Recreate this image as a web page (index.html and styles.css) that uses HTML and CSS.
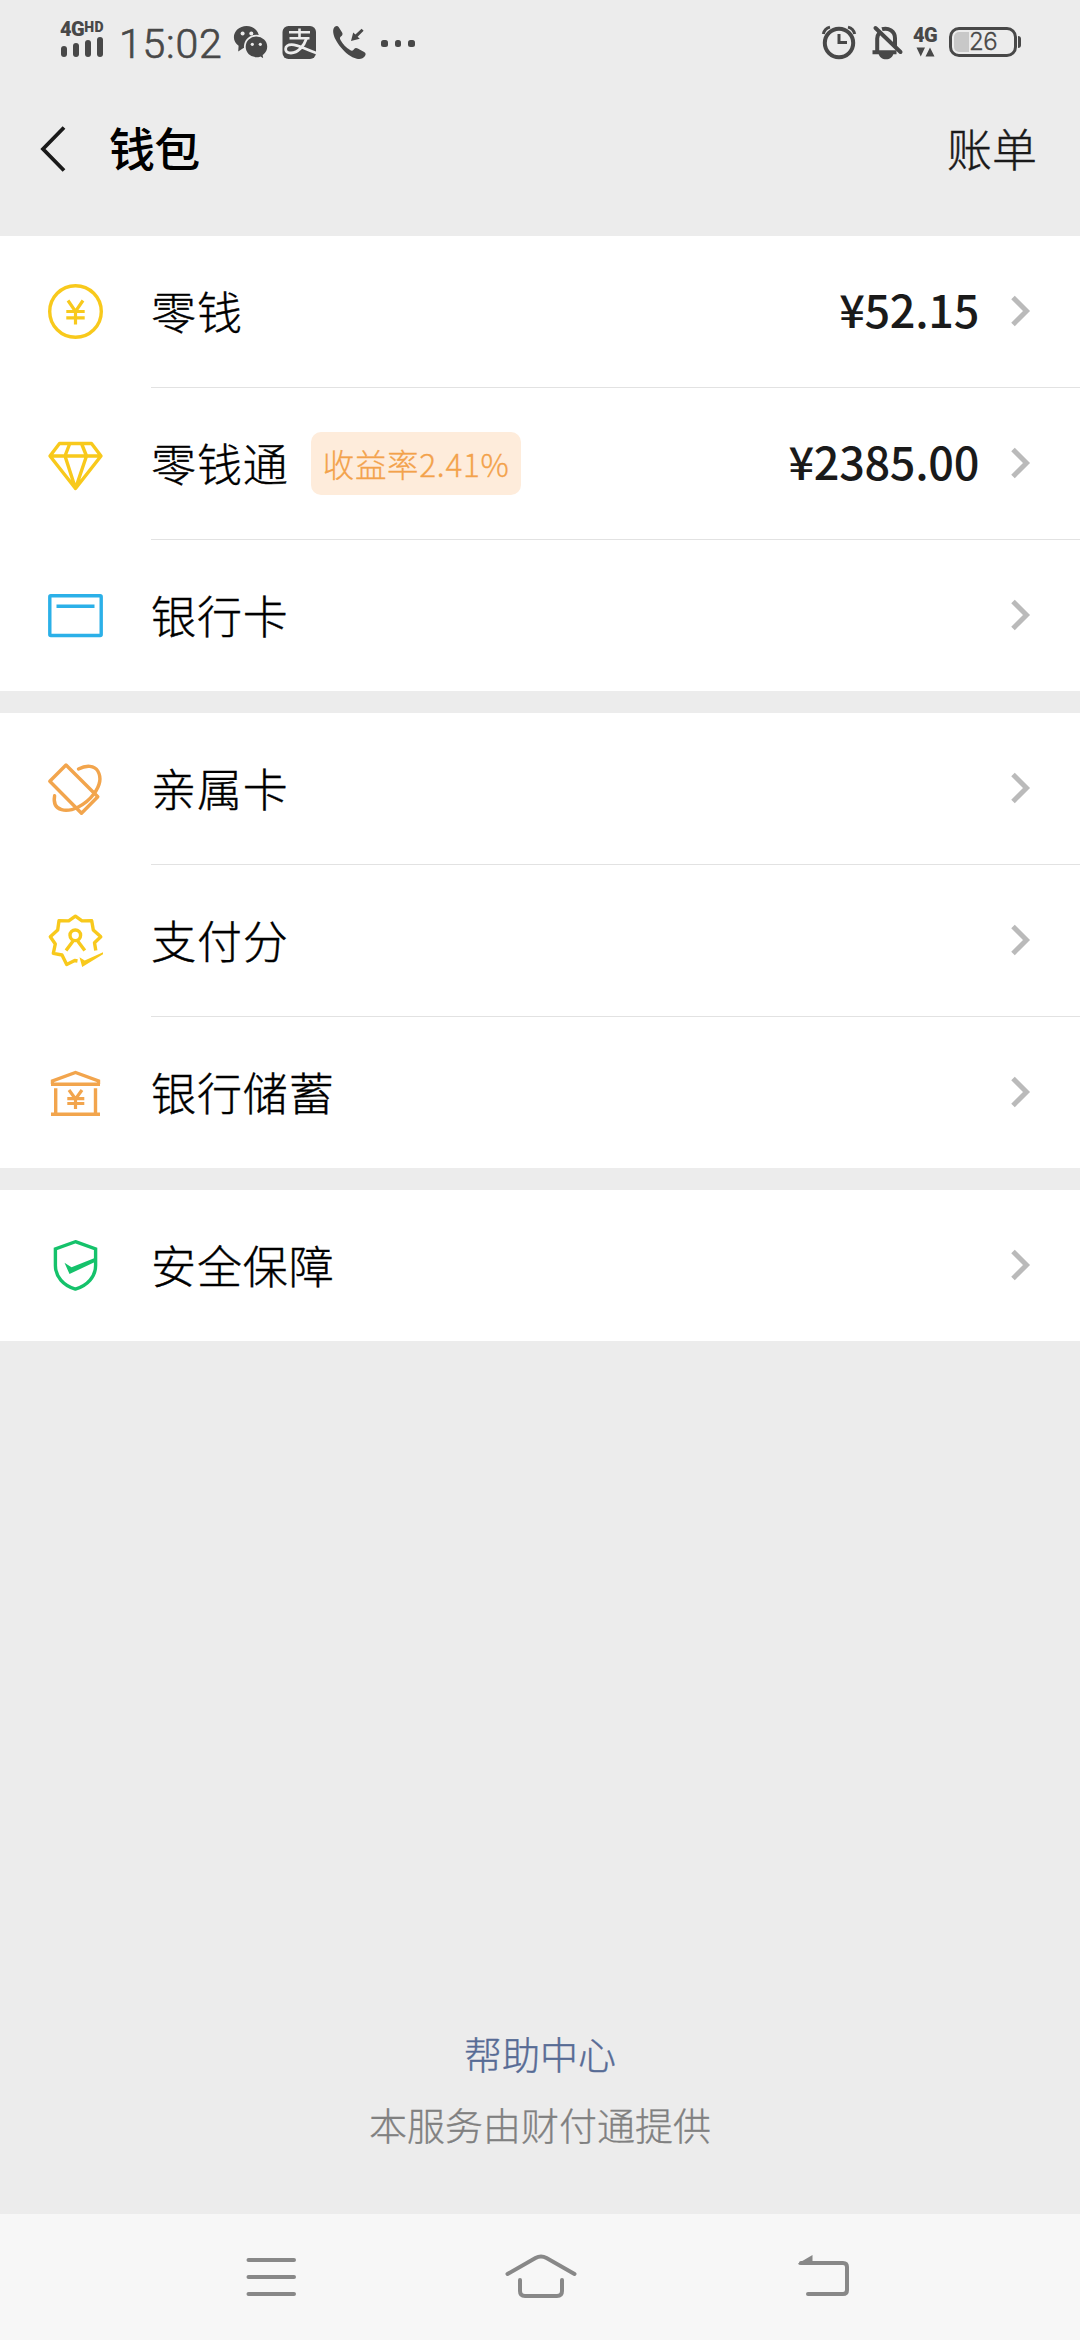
FILE: index.html
```html
<!DOCTYPE html>
<html lang="zh-CN">
<head>
<meta charset="utf-8">
<title>钱包</title>
<link rel="stylesheet" href="styles.css">
</head>
<body>
<div class="screen">
  <header class="status">
    <div class="signal">
      <div class="net"><span class="net-g">4G</span><span class="net-hd">HD</span></div>
      <div class="bars"><i class="bar b1"></i><i class="bar b2"></i><i class="bar b3"></i><i class="bar b4"></i></div>
    </div>
    <div class="time">15:02</div>
    <svg class="st-wechat" width="36" height="36" viewBox="232 25 36 36">
      <path fill="#484848" d="M246.500 26c-7 0-12.600 5-12.600 11.300 0 3.600 1.800 6.500 4.700 8.500l-.4 5.800 5.300-3.600c1 .3 2 .4 3 .4 7 0 12.600-5 12.600-11.100S253.500 26 246.500 26z"/>
      <path fill="#484848" stroke="#ececec" stroke-width="1.800" d="M256.400 35.600c-6.500 0-11.600 4.900-11.600 11.200s5.100 11.300 11.600 11.300c1.500 0 2.800-.2 4-.6l4 2.600-.8-4.600c2.700-2 4.500-5.100 4.500-8.700 0-6.300-5.200-11.200-11.700-11.200z"/>
      <g fill="#ececec"><circle cx="242.600" cy="33.500" r="2"/><circle cx="251.300" cy="33.500" r="2"/><circle cx="252.300" cy="44.300" r="1.600"/><circle cx="260.300" cy="44.300" r="1.600"/></g>
    </svg>
    <svg class="st-alipay" width="36" height="36" viewBox="281 25 36 36">
      <rect x="282.500" y="26" width="33.500" height="33" rx="6" fill="#484848"/>
      <g fill="none" stroke="#ececec"><path stroke-width="2.600" d="M289 32.300h21M289.500 38.300h20M299.500 28.500v9.500"/><path stroke-width="2.800" d="M306.500 38.500c-2.500 7.500-8.500 14.500-15.500 14.500-3.600 0-5.400-1.800-5.400-4 0-2.600 2.400-4.300 6-4.300 7 0 13 4.500 24.600 8.300"/></g>
    </svg>
    <svg class="st-call" width="36" height="36" viewBox="331 25 36 36">
      <path fill="#484848" d="M334.800 26.800c1.600-1.200 3-1 4 .4l3.300 5.400c.8 1.500.5 2.700-.9 3.700-1.500 1.100-1.500 2.200-.7 3.600 2.400 4.300 5.500 7.600 9.600 10.200 1.500.9 2.600.8 3.700-.6 1.200-1.500 2.400-1.800 4-.9l6.300 3.500c1.700 1 2 2.300.9 4-1.900 2.700-4.700 3.500-8.200 2.700-5.900-1.300-11.100-5.500-15.800-11.200-4-5-7.400-10.400-7.800-15.300-.2-2.400.3-4.300 1.600-5.500z"/>
      <path fill="#484848" d="M351 41l2.200-8.600 2.200 2.100 6.200-5.800 2 2-6 6.100 2.200 2z"/>
    </svg>
    <div class="dots"><i class="dot"></i><i class="dot"></i><i class="dot"></i></div>
    <svg class="st-alarm" width="36" height="36" viewBox="820 25 36 36">
      <g fill="none" stroke="#484848"><circle cx="838" cy="43" r="14.200" stroke-width="4"/><path stroke-width="3" d="M838 34v8.500h8"/><path stroke-width="3" d="M822.300 34c.8-3.700 3-6 6.700-6.900M853.700 34c-.8-3.700-3-6-6.700-6.900"/></g>
    </svg>
    <svg class="st-bell" width="34" height="36" viewBox="870 25 34 36">
      <g fill="none" stroke="#484848" stroke-width="4"><path d="M871.500 52.300h24M876.200 51v-12.500c0-2.200.8-4 2-5.500M881 29.200c6.600-2 13 2.300 13 9v8.500"/><path d="M874.500 28l25 24" stroke-linecap="round"/></g>
      <path fill="#484848" d="M877.500 53.500h15c-.8 3.700-3.800 5.800-7.500 5.800s-6.700-2.100-7.500-5.800z"/>
    </svg>
    <div class="data"><span class="data-g">4G</span>
      <svg class="data-arrows" width="19" height="10" viewBox="0 0 19 10"><path fill="#484848" d="M.5.500h8.500l-4.250 9zM9.500 9.500h9l-4.500-9z"/></svg>
    </div>
    <div class="battery"><i class="charge"></i><span class="percent">26</span></div>
    <i class="nub"></i>
  </header>

  <nav class="titlebar">
    <svg class="back" width="30" height="50" viewBox="38 124 30 50"><path fill="none" stroke="#1a1a1a" stroke-width="3.800" d="M64 127.500L43 149l21 21.500"/></svg>
    <h1 class="title">钱包</h1>
    <span class="bill">账单</span>
  </nav>

  <main class="content">
    <section class="group">
      <div class="row">
        <svg class="icon yellow" viewBox="0 0 61 61"><circle cx="30.500" cy="30.500" r="25.800"/><path class="yuan" d="M23 19.500l7.500 11 7.500-11M30.500 30v13.500M21.300 30.500h18.400M21.300 36.800h18.400"/></svg>
        <div class="cell"><span class="label">零钱</span><span class="amount">¥52.15</span><svg class="chev" viewBox="0 0 20 32"><path d="M2 2.500L15.500 16 2 29.500"/></svg></div>
      </div>
      <div class="row">
        <svg class="icon yellow" viewBox="0 0 61 61"><path stroke-linejoin="round" d="M14.500 10.500h32l9.500 12.500-25.500 32.500L5 23zM5 23h51M24.800 10.500l-4.800 12.500 10.500 32.500L41.500 23l-5-12.500"/></svg>
        <div class="cell"><span class="label">零钱通</span><span class="badge">收益率2.41%</span><span class="amount">¥2385.00</span><svg class="chev" viewBox="0 0 20 32"><path d="M2 2.500L15.500 16 2 29.500"/></svg></div>
      </div>
      <div class="row">
        <svg class="icon blue" viewBox="0 0 61 61"><rect x="4.800" y="10.700" width="51.400" height="39.800" rx="1"/><path d="M11.500 21.200h38"/></svg>
        <div class="cell"><span class="label">银行卡</span><svg class="chev" viewBox="0 0 20 32"><path d="M2 2.500L15.500 16 2 29.500"/></svg></div>
      </div>
    </section>
    <section class="group">
      <div class="row">
        <svg class="icon orange" viewBox="0 0 61 61"><path stroke-linejoin="round" d="M21 7L4.800 23.200 36.500 55.300 52.800 38.800z"/><path stroke-linecap="round" d="M33.500 11c8-4.200 16-3.500 19.300 2 3.800 6.500 1.800 15.200-4 23-8 10.700-22.500 18.500-32.200 15.700-6-1.800-8.300-6.700-7-14"/></svg>
        <div class="cell"><span class="label">亲属卡</span><svg class="chev" viewBox="0 0 20 32"><path d="M2 2.500L15.500 16 2 29.500"/></svg></div>
      </div>
      <div class="row">
        <svg class="icon yellow" viewBox="0 0 61 61"><path stroke-linejoin="round" d="M50.800 40.500L49.500 32.800l6.300-6-7.500-6.800-1.600-9.300-9.700.2-6.600-4.700-6.700 4.700-9.700-.2-1.300 9.300-7.400 6.800 5 7.200-2 9.300 8.700 1.700 4.700 9.500 8-4 2.800.5"/><circle cx="30.300" cy="25.300" r="5.300"/><path d="M28.500 30.500L21 40.500M32.300 30.500l7.500 10"/><path class="solid" d="M34.500 47.300l5.200 3.300 18.300-8.300v2L37.200 56.900z"/></svg>
        <div class="cell"><span class="label">支付分</span><svg class="chev" viewBox="0 0 20 32"><path d="M2 2.500L15.500 16 2 29.500"/></svg></div>
      </div>
      <div class="row">
        <svg class="icon orange" viewBox="0 0 61 61"><path d="M6 22.300h49M7.500 22v-3l23-8.500 23 8.500v3M10.700 26.300v25M50.500 26.300v25M6 52.200h49"/><path class="thin" d="M24 28l6.500 9 6.500-9M30.500 36v11M22.300 36.700h17M22.300 41.500h17"/></svg>
        <div class="cell"><span class="label">银行储蓄</span><svg class="chev" viewBox="0 0 20 32"><path d="M2 2.500L15.500 16 2 29.500"/></svg></div>
      </div>
    </section>
    <section class="group">
      <div class="row">
        <svg class="icon green" viewBox="0 0 61 61"><path d="M30.400 6.700l20.200 7.300v16.500c0 11-8 20-20.200 23.600-12.200-3.600-20-12.600-20-23.600V14z"/><path class="solid" d="M19.500 27.800l7 4.500L51 22.500v4L24.500 39z"/></svg>
        <div class="cell"><span class="label">安全保障</span><svg class="chev" viewBox="0 0 20 32"><path d="M2 2.500L15.500 16 2 29.500"/></svg></div>
      </div>
    </section>
  </main>

  <footer class="foot">
    <a class="help">帮助中心</a>
    <p class="provider">本服务由财付通提供</p>
  </footer>

  <div class="navbar">
    <svg width="54" height="50" viewBox="244 2252 54 50"><path d="M248.500 2260h45.500M248.500 2277h45.500M248.500 2294h45.500"/></svg>
    <svg class="home" width="74" height="50" viewBox="504 2252 74 50"><path d="M507.500 2274l28-16q5.500-3 11 0l28 16M520 2280v11q0 5 5 5h32q5 0 5-5v-11"/></svg>
    <svg width="54" height="50" viewBox="797 2252 54 50"><path d="M801 2263h42q4 0 4 4v23q0 4-4 4h-35"/><path class="tip" d="M798 2263.500l14.500-8.500v9.800h-13.500z"/></svg>
  </div>
</div>
</body>
</html>
```
FILE: styles.css
```css
* { box-sizing: border-box; margin: 0; padding: 0; }
body {
  background: #ececec;
  font-family: "Noto Sans CJK SC", "Noto Sans", sans-serif;
  color: #000;
}
svg { display: block; flex: none; }
.screen { width: 1080px; height: 2340px; display: flex; flex-direction: column; background: #ececec; overflow: hidden; }

.status { height: 84px; display: flex; align-items: flex-start; padding: 0 59px 0 60px; color: #484848; font-family: Roboto, sans-serif; }
.signal { width: 47px; padding-top: 21px; }
.net { display: flex; height: 16px; align-items: flex-start; white-space: nowrap; }
.net-g { font: 900 20px/17px Roboto, sans-serif; letter-spacing: -0.5px; }
.net-hd { font: 900 14px/13px Roboto, sans-serif; letter-spacing: 0.5px; }
.bars { display: flex; align-items: flex-end; gap: 6px; height: 20px; padding-left: 1px; }
.bar { width: 6px; border-radius: 3px; background: #484848; }
.b1 { height: 11px; }
.b2 { height: 14px; }
.b3 { height: 17px; }
.b4 { height: 20px; }
.time { width: 105px; margin-left: 12px; padding-top: 21px; font: 300 41px/47px Roboto, sans-serif; letter-spacing: 0.8px; -webkit-text-stroke: 0.7px #484848; }
.st-wechat { margin: 25px 0 0 8px; }
.st-alipay { margin: 25px 0 0 13px; }
.st-call { margin: 25px 0 0 14px; }
.dots { display: flex; gap: 7px; margin: 40px 0 0 14px; }
.dot { width: 6.500px; height: 6.500px; border-radius: 2.500px; background: #484848; }
.st-alarm { margin: 25px 0 0 auto; }
.st-bell { margin: 25px 0 0 14px; }
.data { width: 26px; margin-left: 8px; padding-top: 26px; }
.data-g { display: block; font: 900 20px/18px Roboto, sans-serif; letter-spacing: -0.5px; }
.data-arrows { margin: 3px 0 0 3px; }
.battery { width: 68px; height: 30px; margin: 27px 0 0 10px; border: 3px solid #484848; border-radius: 10px; padding: 2px; display: flex; align-items: center; }
.charge { width: 15px; height: 20px; background: #c8c8c8; border-radius: 5px 0 0 5px; }
.percent { font: 300 24px/20px Inter, sans-serif; letter-spacing: -0.5px; -webkit-text-stroke: 0.3px #484848; }
.nub { width: 3px; height: 12px; margin: 36px 0 0 1px; background: #484848; border-radius: 0 3px 3px 0; }

.titlebar { height: 152px; display: flex; align-items: flex-start; padding: 0 43px 0 38px; }
.back { margin-top: 40px; }
.title { margin: 32px 0 0 41px; font-size: 46px; line-height: 60px; font-weight: 500; letter-spacing: -0.8px; }
.bill { margin: 34px 0 0 auto; font-size: 45px; line-height: 60px; font-weight: 300; color: #1a1a1a; -webkit-text-stroke: 0.4px #1a1a1a; }

.content { display: flex; flex-direction: column; gap: 22px; }
.group { background: #fff; }
.row { display: flex; align-items: flex-start; height: 152px; padding-left: 45px; }
.row:last-child { height: 151px; }
.icon { width: 61px; height: 61px; margin-top: 45px; fill: none; stroke-width: 3.400; }
.yellow { stroke: #f8c91c; color: #f8c91c; }
.blue { stroke: #2bb0e8; }
.orange { stroke: #f2a54d; }
.green { stroke: #15c26b; color: #15c26b; }
.icon .solid { fill: currentColor; stroke: none; }
.icon .yuan, .icon .thin { stroke-width: 3.200; }
.cell { flex: 1; height: 100%; margin-left: 45px; padding-right: 49px; display: flex; align-items: center; border-bottom: 1px solid #e2e2e2; }
.row:last-child .cell { border-bottom: 0; }
.label { font-size: 45px; letter-spacing: 0.900px; line-height: 60px; padding-bottom: 1px; font-weight: 300; -webkit-text-stroke: 0.4px #000; }
.badge { height: 63px; margin-left: 22px; padding: 0 11px 0 12px; border-radius: 10px; background: #feecdb; color: #f3a24b; font-size: 31.500px; line-height: 62px; letter-spacing: 0.700px; font-weight: 300; -webkit-text-stroke: 0.3px #f3a24b; }
.amount { margin-left: auto; padding-bottom: 5px; font-size: 45px; line-height: 60px; font-weight: 500; letter-spacing: -0.3px; color: #1a1a1a; }
.chev { width: 20px; height: 32px; margin: 0 0 1px auto; fill: none; stroke: #bababa; stroke-width: 5; }
.amount + .chev { margin-left: 32px; }

.foot { margin-top: auto; padding-bottom: 62px; text-align: center; font-weight: 300; font-size: 38px; line-height: 57px; }
.help { display: block; color: #576b95; -webkit-text-stroke: 0.4px #576b95; }
.provider { margin-top: 14px; color: #808080; -webkit-text-stroke: 0.3px #808080; }

.navbar { height: 126px; flex: none; background: #f7f7f7; display: flex; align-items: flex-start; padding: 38px 0 0 244px; fill: none; stroke: #888; stroke-width: 4; stroke-linecap: round; }
.navbar .home { margin: 0 219px 0 206px; }
.navbar .tip { fill: #888; stroke: none; }
```
